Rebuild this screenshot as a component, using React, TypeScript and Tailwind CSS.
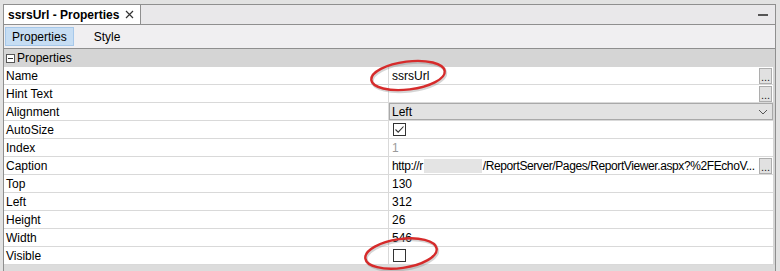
import React from 'react';

const FONT = { fontFamily: '"Liberation Sans", Arial, sans-serif' };

type Row = {
  name: string;
  kind: 'text' | 'dots' | 'select' | 'check' | 'muted' | 'caption';
  value?: string;
  checked?: boolean;
};

const ROWS: Row[] = [
  { name: 'Name', kind: 'dots', value: 'ssrsUrl' },
  { name: 'Hint Text', kind: 'dots', value: '' },
  { name: 'Alignment', kind: 'select', value: 'Left' },
  { name: 'AutoSize', kind: 'check', checked: true },
  { name: 'Index', kind: 'muted', value: '1' },
  { name: 'Caption', kind: 'caption' },
  { name: 'Top', kind: 'text', value: '130' },
  { name: 'Left', kind: 'text', value: '312' },
  { name: 'Height', kind: 'text', value: '26' },
  { name: 'Width', kind: 'text', value: '546' },
  { name: 'Visible', kind: 'check', checked: false },
];

function DotsButton() {
  return (
    <div className="w-[13px] h-[16px] bg-[#e1e1e1] border border-[#adadad] flex items-end justify-center text-[11px] leading-[12px] text-[#222] shrink-0">
      ...
    </div>
  );
}

function Check({ checked }: { checked?: boolean }) {
  return (
    <div className="w-[13px] h-[13px] border border-[#333] bg-white flex items-center justify-center">
      {checked && (
        <svg width="11" height="11" viewBox="0 0 11 11">
          <path d="M1.5 5.5 L4.2 8.2 L9.5 2.5" fill="none" stroke="#333" strokeWidth="1.1" />
        </svg>
      )}
    </div>
  );
}

function Value({ row }: { row: Row }) {
  if (row.kind === 'select') {
    return (
      <div className="flex-1 h-full bg-[#e2e2e2] border border-[#a9a9a9] flex items-center pl-[2px] pr-[4px] text-[12px]">
        <span className="flex-1">{row.value}</span>
        <svg width="10" height="6" viewBox="0 0 10 6">
          <path d="M1 1 L5 5 L9 1" fill="none" stroke="#555" strokeWidth="1" />
        </svg>
      </div>
    );
  }
  if (row.kind === 'check') {
    return (
      <div className="flex-1 flex items-center pl-[4px]">
        <Check checked={row.checked} />
      </div>
    );
  }
  if (row.kind === 'caption') {
    return (
      <div className="flex-1 min-w-0 flex items-center justify-between pl-[3px] pr-[1px] gap-[4px]">
        <span className="flex-1 min-w-0 overflow-hidden flex items-center text-[12px] whitespace-nowrap tracking-[-0.4px]">
          http://r
          <span className="inline-block w-[58px] h-[14px] bg-[#e4e4e4] mx-[1px] shrink-0" />
          /ReportServer/Pages/ReportViewer.aspx?%2FEchoV...
        </span>
        <DotsButton />
      </div>
    );
  }
  return (
    <div className="flex-1 flex items-center justify-between pl-[3px] pr-[1px]">
      <span className={row.kind === 'muted' ? 'text-[12px] text-[#9a9a9a]' : 'text-[12px]'}>{row.value}</span>
      {row.kind === 'dots' && <DotsButton />}
    </div>
  );
}

export default function App() {
  return (
    <div className="w-[780px] h-[271px] bg-[#e2e2e2] pt-[4px] pl-[3px] pr-[4px] overflow-hidden relative text-black" style={FONT}>
      <div className="h-full flex flex-col border-l border-t border-r border-[#8f8f8f] bg-[#d6d6d6]">
        {/* tab header */}
        <div className="h-[20px] flex bg-[#e9e8ea] border-b border-[#8f8f8f] shrink-0">
          <div className="bg-white border-r border-[#8f8f8f] flex items-center pl-[4px] pr-[6px] gap-[6px]">
            <span className="font-bold text-[12px]">ssrsUrl - Properties</span>
            <svg width="9" height="9" viewBox="0 0 9 9">
              <path d="M1 1 L8 8 M8 1 L1 8" stroke="#333" strokeWidth="1.2" />
            </svg>
          </div>
          <div className="flex-1" />
          <div className="flex items-center pr-[7px]">
            <div className="w-[10px] h-[2px] bg-[#555]" />
          </div>
        </div>
        {/* toolbar */}
        <div className="h-[24px] bg-[#f0eff1] border-b border-[#8f8f8f] flex items-center pl-[1px] gap-[20px] shrink-0">
          <div className="h-[19px] px-[6px] bg-[#c6ddf3] border border-[#a6c8ea] flex items-center text-[12px]">Properties</div>
          <span className="text-[12px]">Style</span>
        </div>
        {/* section */}
        <div className="h-[18px] bg-[#d5d5d5] flex items-center pl-[2px] gap-[2px] shrink-0">
          <div className="w-[9px] h-[9px] border border-[#555] bg-white flex items-center justify-center">
            <div className="w-[5px] h-[1px] bg-[#333]" />
          </div>
          <span className="text-[12px]">Properties</span>
        </div>
        <div className="flex flex-col bg-white mr-[2px]">
          {ROWS.map((r) => (
            <div key={r.name} className="h-[18px] flex border-b border-[#d9d9d9]">
              <div className="w-[385px] shrink-0 border-r border-[#d9d9d9] flex items-center pl-[2px] text-[12px]">{r.name}</div>
              <Value row={r} />
            </div>
          ))}
        </div>
        <div className="flex-1 bg-[#dcdcdc]" />
      </div>

      {/* red annotation ovals */}
      <svg className="absolute left-0 top-0 pointer-events-none" width="780" height="271">
        <ellipse cx="409" cy="77" rx="37" ry="14" transform="rotate(-7 409 77)" fill="none" stroke="#888" strokeOpacity="0.35" strokeWidth="3" />
        <ellipse cx="408" cy="75.5" rx="37" ry="14" transform="rotate(-7 408 75.5)" fill="none" stroke="#d62b2b" strokeWidth="2.4" />
        <ellipse cx="402" cy="255" rx="36" ry="14.5" transform="rotate(-8 402 255)" fill="none" stroke="#888" strokeOpacity="0.35" strokeWidth="3" />
        <ellipse cx="401" cy="253.5" rx="36" ry="14.5" transform="rotate(-8 401 253.5)" fill="none" stroke="#d62b2b" strokeWidth="2.4" />
      </svg>
    </div>
  );
}
